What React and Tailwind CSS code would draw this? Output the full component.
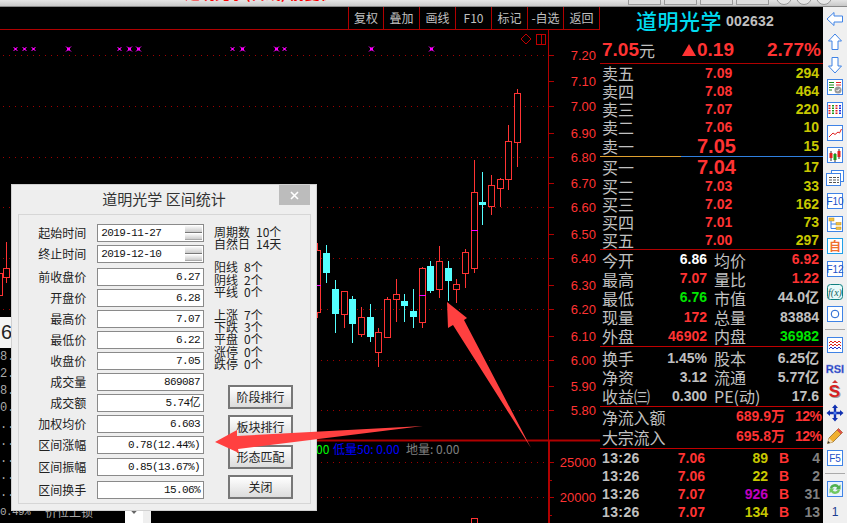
import React from "react";

const CJK = "font-['Noto_Sans_CJK_SC',sans-serif]";
const MONO = "font-['Liberation_Mono','Noto_Sans_CJK_SC',monospace]";
const NUM = "font-['Liberation_Sans','Noto_Sans_CJK_SC',sans-serif]";

const UP = "#ff3333";
const DOWN = "#54ffff";
const GRID = "#a00000";

// x, high, body top, body bottom, low
const candles = [
  [517.5, 89, 93, 142, 167, "u"],
  [508.5, 125, 141, 179, 190, "u"],
  [500.5, 178, 179, 188, 207, "u"],
  [491.5, 175, 185, 206, 215, "u"],
  [482.5, 172, 202, 205, 225, "d"],
  [474.5, 160, 192, 268, 273, "u"],
  [465.5, 249, 252, 273, 288, "u"],
  [456.5, 279, 284, 289, 303, "u"],
  [448.5, 261, 268, 281, 301, "d"],
  [439.5, 246, 261, 289, 298, "u"],
  [430.5, 261, 266, 291, 293, "d"],
  [422.5, 267, 268, 322, 328, "u"],
  [413.5, 289, 311, 317, 328, "d"],
  [404.5, 294, 301, 306, 322, "d"],
  [396.5, 279, 294, 299, 322, "u"],
  [387.5, 297, 299, 337, 337, "u"],
  [378.5, 328, 332, 352, 367, "u"],
  [370.5, 304, 317, 337, 342, "d"],
  [361.5, 307, 317, 334, 337, "u"],
  [352.5, 296, 299, 324, 343, "d"],
  [344.5, 291, 291, 314, 328, "u"],
  [335.5, 280, 289, 314, 333, "d"],
  [326.5, 245, 253, 273, 283, "d"],
  [317.5, 243, 250, 312, 318, "u"],
  [6.5, 242, 268, 277, 283, "u"],
  [-0.5, 262, 273, 295, 300, "u"],
];

const markers = [
  [15, 1.5], [24, 1.5], [33, 1.5], [68, 2], [119, 1.5], [129, 2], [138, 2],
  [232, 1.5], [242, 2], [276, 2], [284, 1.5], [371, 2], [431, 2],
];

const gridRows = [55, 106, 157, 207, 258, 309, 360, 410, 462, 497];

const priceLabels = [
  ["7.20", 55], ["7.10", 81], ["7.00", 106], ["6.90", 133], ["6.80", 157],
  ["6.70", 183], ["6.60", 207], ["6.50", 234], ["6.40", 258], ["6.30", 285],
  ["6.20", 309], ["6.10", 336], ["6.00", 360], ["5.90", 386], ["5.80", 410],
  ["25000", 462], ["20000", 497],
];

function ChartCanvas() {
  return (
    <svg className="absolute left-0 top-0" width="600" height="523" viewBox="0 0 600 523">
      {gridRows.map((y) => (
        <line key={y} x1="3" x2="546" y1={y + 0.5} y2={y + 0.5} stroke={GRID} strokeDasharray="1 5" />
      ))}
      <line x1="0" x2="600" y1="29.5" y2="29.5" stroke="#b00000" />
      <line x1="0" x2="600" y1="440.5" y2="440.5" stroke="#b00000" strokeWidth="2" />
      <line x1="548.5" x2="548.5" y1="29" y2="440" stroke="#b00000" />
      <line x1="549" x2="549" y1="440" y2="523" stroke="#b00000" strokeWidth="2" />

      {priceLabels.map(([text, y]) => (
        <g key={text}>
          <line x1="549" x2="554" y1={y + 0.5} y2={y + 0.5} stroke="#b00000" />
          <text x="596" y={y + 5} textAnchor="end" fill={UP} fontFamily="Liberation Sans" fontSize="13">
            {text}
          </text>
        </g>
      ))}
      <line x1="549" x2="552" y1="480.5" y2="480.5" stroke="#b00000" />
      <line x1="549" x2="552" y1="515.5" y2="515.5" stroke="#b00000" />

      {/* layout toggles in the chart corner */}
      <path d="M526 34 L531 39 L526 44 L521 39 Z" fill="none" stroke="#c00000" />
      <rect x="536.5" y="34.5" width="9" height="10" fill="none" stroke="#c00000" />
      <line x1="541.5" x2="541.5" y1="34" y2="45" stroke="#c00000" />

      {markers.map(([x, r]) => (
        <g key={x} stroke="#ff00ff">
          <line x1={x - r} x2={x + r + 1} y1={48.5 - r} y2={49.5 + r} />
          <line x1={x + r + 1} x2={x - r} y1={48.5 - r} y2={49.5 + r} />
          <rect x={r === 2 ? x - 1 : x - 0.5} y={r === 2 ? 47.5 : 48} width={r === 2 ? 3 : 2} height={r === 2 ? 3 : 2} fill="#ff00ff" stroke="none" />
        </g>
      ))}

      {candles.map(([x, high, top, bottom, low, dir]) => {
        const color = dir === "u" ? UP : DOWN;
        return (
          <g key={x}>
            <line x1={x} x2={x} y1={high} y2={top} stroke={color} />
            <line x1={x} x2={x} y1={bottom} y2={low} stroke={color} />
            {dir === "u" ? (
              <rect x={x - 3} y={top + 0.5} width="6" height={bottom - top} fill="#000" stroke={color} />
            ) : (
              <rect x={x - 3.5} y={top} width="7" height={bottom - top} fill={color} />
            )}
          </g>
        );
      })}
      <line x1="471" x2="478" y1="230.5" y2="230.5" stroke="#ff00ff" />
      <line x1="419" x2="426" y1="295.5" y2="295.5" stroke="#ff00ff" />
      <line x1="314" x2="321" y1="285.5" y2="285.5" stroke="#ff00ff" />

      {/* volume bar peeking in at the bottom */}
      <rect x="471.5" y="518.5" width="6" height="8" fill="#000" stroke={UP} />

      <text y="454" fontSize="12" fontFamily="Noto Sans CJK SC">
        <tspan x="316" fill="#00ff00">00</tspan>
        <tspan x="333" fill="#0000ff">低量50: 0.00</tspan>
        <tspan x="406" fill="#808080">地量: 0.00</tspan>
      </text>
    </svg>
  );
}

function ToolButton({ label, className }) {
  return (
    <div className={`flex items-center justify-center h-full border-r border-[#b00000] text-[12px] text-[#c0c0c0] ${className}`}>
      {label}
    </div>
  );
}

function Toolbar() {
  return (
    <div className={`relative flex h-[22px] pl-[348px] ${CJK}`}>
      <div className="w-0 h-full border-l border-[#b00000]" />
      <ToolButton label="复权" className="w-[35px]" />
      <ToolButton label="叠加" className="w-[36px]" />
      <ToolButton label="画线" className="w-[36px]" />
      <ToolButton label="F10" className="w-[36px]" />
      <ToolButton label="标记" className="w-[36px]" />
      <ToolButton label="-自选" className="w-[36px]" />
      <ToolButton label="返回" className="w-[36px]" />
    </div>
  );
}

const sideRows = ["8.2", "2.1", "8.4", "0.0", "..1", "..3", "..5", "..2", "..4"];

function SidePanel() {
  return (
    <div className={`absolute left-0 top-[317px] w-[151px] h-[206px] flex flex-col bg-black ${MONO}`}>
      <div className="h-[31px] bg-[#f4f4f4] pl-[1px] text-[20px] leading-[31px] text-[#222] font-['Liberation_Sans',sans-serif]">6</div>
      <div className="flex flex-col pt-[1px]">
        {sideRows.map((t, i) => (
          <div key={i} className="h-[17px] text-[12px] leading-[17px] text-[#aaa]">{t}</div>
        ))}
      </div>
      <div className="flex-1 flex items-end">
        <div className="flex h-[21px] w-full">
          <div className="w-[45px] pt-[3px] text-[11px] leading-[14px] text-[#aaa] tracking-[-0.6px]">0.49%</div>
          <div className={`w-[80px] pt-[2px] text-[12px] leading-[16px] text-[#aaa] ${CJK}`}>价位上锁</div>
          <div className="w-[18px] bg-white flex justify-center pt-[5px]">
            <svg width="10" height="8" viewBox="0 0 10 8">
              <path d="M1 1 L5 5.5 L9 1" fill="none" stroke="#666" strokeWidth="2" />
            </svg>
          </div>
          <div className="w-[8px] bg-[#efefef]" />
        </div>
      </div>
    </div>
  );
}

const fieldRows = [
  { label: "前收盘价", value: "6.27", gap: "mt-[5px]" },
  { label: "开盘价", value: "6.28", gap: "mt-[3px]" },
  { label: "最高价", value: "7.07", gap: "mt-[3px]" },
  { label: "最低价", value: "6.22", gap: "mt-[3px]" },
  { label: "收盘价", value: "7.05", gap: "mt-[3px]" },
  { label: "成交量", value: "869087", gap: "mt-[3px]" },
  { label: "成交额", value: "5.74亿", gap: "mt-[3px]" },
  { label: "加权均价", value: "6.603", gap: "mt-[3px]" },
  { label: "区间涨幅", value: "0.78(12.44%)", gap: "mt-[3px]" },
  { label: "区间振幅", value: "0.85(13.67%)", gap: "mt-[4px]" },
  { label: "区间换手", value: "15.06%", gap: "mt-[5px]" },
];

function FieldLabel({ children }) {
  return <div className="w-[67px] pr-0 text-right text-[12px] leading-[18px] text-[#222]">{children}</div>;
}

function DateRow({ label, value, className }) {
  return (
    <div className={`flex h-[18px] ${className}`}>
      <FieldLabel>{label}</FieldLabel>
      <div className={`relative ml-[11px] w-[108px] border border-[#8a8a8a] bg-white pl-[3px] text-[11px] leading-[16px] tracking-[-0.6px] text-[#111] ${MONO}`}>
        {value}
        <div className="absolute right-[1px] top-[1px] flex flex-col gap-[1px] w-[17px]">
          <div className="h-[6.5px] bg-gradient-to-b from-[#f8f8f8] to-[#ccc] border-b border-[#777]" />
          <div className="h-[6.5px] bg-gradient-to-b from-[#f8f8f8] to-[#ccc] border-b border-[#aaa]" />
        </div>
      </div>
    </div>
  );
}

function StatLine({ label, value }) {
  return (
    <div className="flex h-[12.2px] text-[12px] leading-[12px] text-[#222]">
      <span>{label}</span>
      <span className="ml-[6px]">{value}</span>
    </div>
  );
}

function DialogButton({ label, className }) {
  return (
    <div className={`flex items-center justify-center w-[65px] h-[24px] border-2 border-[#777] bg-gradient-to-b from-white to-[#dcdcdc] text-[12px] text-[#222] ${className}`}>
      {label}
    </div>
  );
}

function StatsDialog() {
  return (
    <div className={`absolute left-[11px] top-[184px] w-[306px] h-[327px] flex flex-col border border-[#d0d0d0] bg-[#eeeeee] ${CJK}`}>
      <div className="relative h-[29px] flex items-center justify-center pr-[0px] text-[15px] text-[#333]">
        道明光学 区间统计
        <div className="absolute right-[6px] top-0 w-[31px] h-[20px] bg-[#bcbcbc] flex items-center justify-center">
          <svg width="9" height="9" viewBox="0 0 9 9">
            <path d="M1 1 L8 8 M8 1 L1 8" stroke="#fff" strokeWidth="1.6" />
          </svg>
        </div>
      </div>
      <div className="ml-[6px] w-[293px] h-[290px] border border-[#d6d6d6] flex">
        <div className="w-[185px] pt-[9px] pl-[1px] flex flex-col">
          <DateRow label="起始时间" value="2019-11-27" />
          <DateRow label="终止时间" value="2019-12-10" className="mt-[3px]" />
          {fieldRows.map((row) => (
            <div key={row.label} className={`flex h-[18px] ${row.gap}`}>
              <FieldLabel>{row.label}</FieldLabel>
              <div className={`ml-[11px] w-[108px] border border-[#8a8a8a] bg-white pr-[3px] text-right text-[11px] leading-[16px] tracking-[-0.6px] text-[#111] ${MONO}`}>
                {row.value}
              </div>
            </div>
          ))}
        </div>
        <div className="ml-[10px] pt-[11px] flex flex-col">
          <StatLine label="周期数" value="10个" />
          <StatLine label="自然日" value="14天" />
          <div className="h-[11px]" />
          <StatLine label="阳线" value="8个" />
          <StatLine label="阴线" value="2个" />
          <StatLine label="平线" value="0个" />
          <div className="h-[11px]" />
          <StatLine label="上涨" value="7个" />
          <StatLine label="下跌" value="3个" />
          <StatLine label="平盘" value="0个" />
          <StatLine label="涨停" value="0个" />
          <StatLine label="跌停" value="0个" />
          <div className="ml-[14px] mt-[15px] flex flex-col gap-[6px]">
            <DialogButton label="阶段排行" />
            <DialogButton label="板块排行" />
            <DialogButton label="形态匹配" />
            <DialogButton label="关闭" />
          </div>
        </div>
      </div>
    </div>
  );
}

const asks = [
  ["卖五", "7.09", "294"],
  ["卖四", "7.08", "464"],
  ["卖三", "7.07", "220"],
  ["卖二", "7.06", "10"],
];
const bids = [
  ["买二", "7.03", "33"],
  ["买三", "7.02", "162"],
  ["买四", "7.01", "73"],
  ["买五", "7.00", "297"],
];

function BookRow({ label, price, volume, big }) {
  return (
    <div className={`flex items-center ${big ? "h-[20px]" : "h-[18px]"}`}>
      <span className={`${big ? "w-[95px]" : "w-[103px]"} text-[16px] leading-none text-[#c0c0c0] ${CJK}`}>{label}</span>
      <span className={`${big ? "w-[40px] text-[20px]" : "w-[32px] text-[14px]"} font-bold text-[#ff3333] ${NUM}`}>{price}</span>
      <span className={`flex-1 pr-[4px] text-right text-[14px] font-bold text-[#c8c800] ${NUM}`}>{volume}</span>
    </div>
  );
}

const stats1 = [
  ["今开", "6.86", "text-white", "均价", "6.92", "text-[#ff3333]"],
  ["最高", "7.07", "text-[#ff3333]", "量比", "1.22", "text-[#ff3333]"],
  ["最低", "6.76", "text-[#00e600]", "市值", "44.0亿", "text-[#c0c0c0]"],
  ["现量", "172", "text-[#ff3333]", "总量", "83884", "text-[#c0c0c0]"],
  ["外盘", "46902", "text-[#ff3333]", "内盘", "36982", "text-[#00e600]"],
];
const stats2 = [
  ["换手", "1.45%", "text-[#c0c0c0]", "股本", "6.25亿", "text-[#c0c0c0]"],
  ["净资", "3.12", "text-[#c0c0c0]", "流通", "5.77亿", "text-[#c0c0c0]"],
  ["收益㈢", "0.300", "text-[#c0c0c0]", "PE(动)", "17.6", "text-[#c0c0c0]"],
];

function StatRow({ row, rowClass }) {
  const [l1, v1, c1, l2, v2, c2] = row;
  return (
    <div className={`flex items-center ${rowClass}`}>
      <span className={`w-[50px] whitespace-nowrap text-[16px] leading-none text-[#c0c0c0] ${CJK}`}>{l1}</span>
      <span className={`w-[55px] text-right text-[14px] font-bold ${c1} ${NUM}`}>{v1}</span>
      <span className={`ml-[7px] w-[50px] whitespace-nowrap text-[16px] leading-none text-[#c0c0c0] ${CJK}`}>{l2}</span>
      <span className={`w-[55px] text-right text-[14px] font-bold ${c2} ${NUM}`}>{v2}</span>
    </div>
  );
}

const ticks = [
  ["13:26", "7.06", "89", "text-[#c8c800]", "4", "text-[#808080]"],
  ["13:26", "7.06", "22", "text-[#c8c800]", "2", "text-[#808080]"],
  ["13:26", "7.07", "926", "text-[#c000c0]", "31", "text-[#808080]"],
  ["13:26", "7.07", "134", "text-[#c8c800]", "13", "text-[#808080]"],
];

function FlowRow({ label, amount, pct }) {
  return (
    <div className="flex items-center h-[20px]">
      <span className={`w-[103px] text-[16px] leading-none tracking-[-0.2px] text-[#c0c0c0] ${CJK}`}>{label}</span>
      <span className={`w-[80px] text-right text-[14px] font-bold text-[#ff3333] ${NUM}`}>{amount}</span>
      <span className={`ml-[10px] text-[14px] font-bold tracking-[-0.5px] text-[#ff3333] ${NUM}`}>{pct}</span>
    </div>
  );
}

function QuotePanel() {
  return (
    <div className="w-[223px] flex flex-col bg-black">
      <div className="h-[26px] flex items-center pl-[36px]">
        <span className={`text-[21px] leading-none font-medium tracking-[0.5px] text-[#00dcf0] ${CJK}`}>道明光学</span>
        <span className={`ml-[4px] mt-[2px] text-[14px] font-bold tracking-[0.2px] text-[#c0c0c0] ${NUM}`}>002632</span>
      </div>
      <div className={`h-[31px] pt-[4px] pl-[2px] flex items-center border-b border-[#b00000] ${NUM}`}>
        <span className="w-[37px] text-[19px] font-bold text-[#ff3333]">7.05</span>
        <span className={`w-[43px] text-[16px] leading-none text-[#c0c0c0] ${CJK}`}>元</span>
        <span className="w-[85px] flex items-center gap-[1px] text-[19px] font-bold text-[#ff3333]">
          <svg width="14" height="12" viewBox="0 0 14 12">
            <path d="M7 0 L14 12 L0 12 Z" fill="#ff3333" />
          </svg>
          0.19
        </span>
        <span className="text-[19px] font-bold text-[#ff3333]">2.77%</span>
      </div>
      <div className="pl-[2px]">
        {asks.map(([l, p, v]) => <BookRow key={l} label={l} price={p} volume={v} />)}
        <BookRow label="卖一" price="7.05" volume="15" big />
      </div>
      <div className="flex h-px">
        <div className="w-[81px] bg-[#e0a030]" />
        <div className="flex-1 bg-[#3080e0]" />
      </div>
      <div className="pl-[2px]">
        <BookRow label="买一" price="7.04" volume="17" big />
        {bids.map(([l, p, v]) => <BookRow key={l} label={l} price={p} volume={v} />)}
      </div>
      <div className="h-px bg-[#b00000]" />
      <div className="pl-[2px]">
        {stats1.map((r) => <StatRow key={r[0]} row={r} rowClass="h-[19.2px]" />)}
      </div>
      <div className="h-px bg-[#c00000]" />
      <div className="pl-[2px] pt-[2px]">
        {stats2.map((r) => <StatRow key={r[0]} row={r} rowClass="h-[19px]" />)}
      </div>
      <div className="h-px bg-[#c00000]" />
      <div className="pl-[2px] pb-[1px]">
        <FlowRow label="净流入额" amount="689.9万" pct="12%" />
        <FlowRow label="大宗流入" amount="695.8万" pct="12%" />
      </div>
      <div className="h-px bg-[#c00000]" />
      <div className="pl-[2px] pt-[1px]">
        {ticks.map((t, i) => (
          <div key={i} className={`flex items-center h-[18px] text-[14px] font-bold ${NUM}`}>
            <span className="w-[66px] tracking-[0.4px] text-[#c0c0c0]">{t[0]}</span>
            <span className="w-[37px] text-right text-[#ff3333]">{t[1]}</span>
            <span className="w-[63px] text-right">
              <span className={t[3]}>{t[2]}</span>
            </span>
            <span className="ml-[11px] w-[10px] text-[#ff3333]">B</span>
            <span className={`flex-1 pr-[3px] text-right ${t[5]}`}>{t[4]}</span>
          </div>
        ))}
      </div>
    </div>
  );
}

const BLUE = "#3f83e6";

function Box({ children, stroke = BLUE }) {
  return (
    <svg width="18" height="18" viewBox="0 0 18 18">
      <rect x="1.5" y="1.5" width="15" height="15" fill="#fff" stroke={stroke} />
      {children}
    </svg>
  );
}

function BoxText({ children, fill = "#1c50c8", size = 10 }) {
  return (
    <text x="9" y="13" textAnchor="middle" fontSize={size} fontFamily="Liberation Sans" fill={fill}>
      {children}
    </text>
  );
}

// toolbar icons down the right edge, top to bottom
const sideIcons = [
  <svg key="left" width="18" height="16" viewBox="0 0 18 16"><path d="M1 8 L8 1.5 V5 H16.5 V11 H8 V14.5 Z" fill="#fff" stroke={BLUE} /></svg>,
  <svg key="up" width="16" height="18" viewBox="0 0 16 18"><path d="M8 1 L14.5 8 H11 V16.5 H5 V8 H1.5 Z" fill="#fff" stroke={BLUE} /></svg>,
  <svg key="down" width="16" height="18" viewBox="0 0 16 18"><path d="M8 17 L14.5 10 H11 V1.5 H5 V10 H1.5 Z" fill="#fff" stroke={BLUE} /></svg>,
  <Box key="pick">
    <path d="M3 4.5h5M3 7h5M3 9.5h5M3 12h3" stroke="#1a8a1a" />
    <path d="M10 4.5h5M10 7h5" stroke="#e02020" />
    <circle cx="12" cy="12" r="3.5" fill="#999" />
    <path d="M10.5 12l1.2 1.2 2-2.4" stroke="#fff" fill="none" />
  </Box>,
  <Box key="grid">
    <path d="M3.5 4v10" stroke="#e02020" strokeWidth="2" strokeDasharray="1.5 1" />
    <path d="M7 4v10" stroke="#1a9a1a" strokeWidth="2" strokeDasharray="1.5 1" />
    <path d="M10.5 4v10" stroke="#e02020" strokeWidth="2" strokeDasharray="1.5 1" />
    <path d="M14 4v10" stroke="#2030e0" strokeWidth="2" strokeDasharray="1.5 1" />
  </Box>,
  <Box key="line"><path d="M3 13 L7 9 L9 10.5 L12 8 L13.5 9 L15.5 5" fill="none" stroke="#e02020" /></Box>,
  <Box key="kline">
    <path d="M5 5v10M9 7v9M13 3v10" stroke="#333" />
    <rect x="3.5" y="7" width="3" height="5" fill="#e02020" />
    <rect x="7.5" y="8" width="3" height="6" fill="#1a9a1a" />
    <rect x="11.5" y="5" width="3" height="6" fill="#e02020" />
  </Box>,
  <svg key="windows" width="18" height="18" viewBox="0 0 18 18">
    <rect x="5.5" y="1.5" width="12" height="11" fill="#fff" stroke={BLUE} />
    <rect x="0.5" y="4.5" width="14" height="12" fill="#fff" stroke={BLUE} />
    <path d="M3 8.5h3M7 8.5h3M11 8.5h2M3 11h3M7 11h3M11 11h2M3 13.5h3M7 13.5h3M11 13.5h2" stroke="#555" />
  </svg>,
  <Box key="f10"><BoxText>F10</BoxText></Box>,
  <Box key="tree">
    <rect x="3" y="3" width="5" height="3" fill="#f0c040" stroke="#c09020" strokeWidth="0.5" />
    <rect x="10" y="7.5" width="5" height="2.5" fill="#f0c040" stroke="#c09020" strokeWidth="0.5" />
    <rect x="10" y="12" width="5" height="2.5" fill="#f0c040" stroke="#c09020" strokeWidth="0.5" />
    <path d="M5 6v7.5h5M5 9h5" fill="none" stroke={BLUE} />
  </Box>,
  <Box key="self" stroke="#20a0e8">
    <text x="9" y="13.5" textAnchor="middle" fontSize="12" fontWeight="700" fontFamily="Noto Sans CJK SC" fill="#f07030">自</text>
  </Box>,
  <Box key="f12"><BoxText>F12</BoxText></Box>,
  <svg key="fx" width="18" height="18" viewBox="0 0 18 18">
    <rect x="1.5" y="1.5" width="15" height="15" rx="3" fill="#e8fafa" stroke="#108080" />
    <text x="9" y="13" textAnchor="middle" fontSize="10" fontStyle="italic" fontFamily="Liberation Serif" fill="#106060">f(x)</text>
  </svg>,
  <Box key="circle"><circle cx="9" cy="9" r="3.8" fill="none" stroke="#1c60d0" /></Box>,
  <Box key="wave">
    <path d="M3 7l2-2 2 2 2-2 2 2 2-2 2 2" fill="none" stroke="#e02020" />
    <path d="M3 10l2-2 2 2 2-2 2 2 2-2 2 2" fill="none" stroke="#e02020" />
    <path d="M3 13l2-2 2 2 2-2 2 2 2-2 2 2" fill="none" stroke="#2030d0" />
  </Box>,
  <svg key="rsi" width="20" height="14" viewBox="0 0 20 14">
    <text x="10" y="11.5" textAnchor="middle" fontSize="11" fontWeight="700" fontFamily="Liberation Sans" fill="#2040c0" stroke="#8090e0" strokeWidth="0.3">RSI</text>
  </svg>,
  <svg key="s" width="16" height="20" viewBox="0 0 16 20">
    <path d="M8 0 L11 3 H5 Z" fill="#d03030" />
    <text x="8.5" y="17.5" textAnchor="middle" fontSize="17" fontWeight="700" fontFamily="Liberation Sans" fill="#999">S</text>
    <text x="7.5" y="16.5" textAnchor="middle" fontSize="17" fontWeight="700" fontFamily="Liberation Sans" fill="#d82020">S</text>
  </svg>,
  <svg key="move" width="18" height="18" viewBox="0 0 18 18">
    <path d="M9 0.5 L12 4 H10.2 V7.8 H14 V6 L17.5 9 L14 12 V10.2 H10.2 V14 H12 L9 17.5 L6 14 H7.8 V10.2 H4 V12 L0.5 9 L4 6 V7.8 H7.8 V4 H6 Z" fill="#1030b0" />
    <circle cx="9" cy="9" r="1.6" fill="#5080f0" />
  </svg>,
  <svg key="pencil" width="18" height="18" viewBox="0 0 18 18">
    <path d="M1.5 16.5 L3 11 L12.5 1.5 L16.5 5.5 L7 15 Z" fill="#f0b030" stroke="#8a6020" strokeWidth="0.7" />
    <path d="M1.5 16.5 L3 11 L7 15 Z" fill="#f4dcb0" />
    <path d="M1.5 16.5 L2.2 14 L4 15.8 Z" fill="#333" />
    <path d="M11 3 L15 7" stroke="#c07010" />
    <path d="M12.5 1.5 L16.5 5.5 L15 7 L11 3 Z" fill="#e05050" />
  </svg>,
  <Box key="f5"><BoxText>F5</BoxText></Box>,
  <svg key="refresh" width="18" height="18" viewBox="0 0 18 18">
    <rect x="1.5" y="1.5" width="15" height="15" fill="#e8f2ff" stroke={BLUE} />
    <path d="M4 8 A5 4.5 0 0 1 13 6 L14.5 4.5 V9.5 H9.5 L11.2 7.8 A3 3 0 0 0 6 9 Z" fill="#50b050" />
    <path d="M14 10 A5 4.5 0 0 1 5 12 L3.5 13.5 V8.5 H8.5 L6.8 10.2 A3 3 0 0 0 12 9.5 Z" fill="#70c860" />
  </svg>,
  <span key="page" className="text-[12px] text-[#1c3c90] font-['Liberation_Sans',sans-serif]">1</span>,
];

function SideToolbar() {
  return (
    <div className="w-[24px] flex flex-col items-center bg-[#f0f0f0] pt-[1px]">
      {sideIcons.map((icon, i) => (
        <React.Fragment key={i}>
          <div className="h-[23px] flex items-center justify-center">{icon}</div>
          {(i === 13 || i === 19) && (
            <div className="h-[8px] w-full flex items-center justify-center">
              <div className="w-[20px] h-px bg-[#aaa]" />
            </div>
          )}
        </React.Fragment>
      ))}
    </div>
  );
}

function TitleStrip() {
  return (
    <div className="relative h-[7px] overflow-hidden bg-gradient-to-b from-[#e4e4e4] to-[#c8c8c8] border-b border-[#888] flex">
      <div className={`ml-[185px] w-[141px] -mt-[16px] text-[15px] leading-[18px] font-bold whitespace-nowrap overflow-hidden text-[#ff0000] ${CJK}`}>
        道明光学(日线) 前复权 均线
      </div>
      <div className="ml-[302px] flex gap-[3px] h-[5px]">
        {[0, 1, 2, 3].map((i) => (
          <div key={i} className="w-[33px] h-full bg-[#dcdcdc] border border-t-0 border-[#999]" />
        ))}
      </div>
      <div className="ml-[7px] flex gap-[4px] -mt-[11px]">
        {[0, 1, 2].map((i) => (
          <div key={i} className="w-[16px] h-[16px] rounded-full bg-[#e8e8e8] border border-[#999]" />
        ))}
      </div>
    </div>
  );
}

export default function App() {
  return (
    <div className="relative w-[847px] h-[523px] overflow-hidden bg-black flex flex-col">
      <TitleStrip />
      <div className="flex-1 flex min-h-0">
        <div className="w-[600px]">
          <Toolbar />
        </div>
        <QuotePanel />
        <SideToolbar />
      </div>
      <ChartCanvas />
      <SidePanel />
      <StatsDialog />
      {/* two hand-drawn callout arrows on top of everything */}
      <svg className="absolute left-0 top-0 pointer-events-none" width="847" height="523" viewBox="0 0 847 523">
        <polygon points="447,302 467,318 464,320 531,448 453,325 448,328" fill="#ff4040" />
        <polygon points="215,442 237,430 237,436 423,426 238,449 239,453" fill="#ff4040" />
      </svg>
    </div>
  );
}
